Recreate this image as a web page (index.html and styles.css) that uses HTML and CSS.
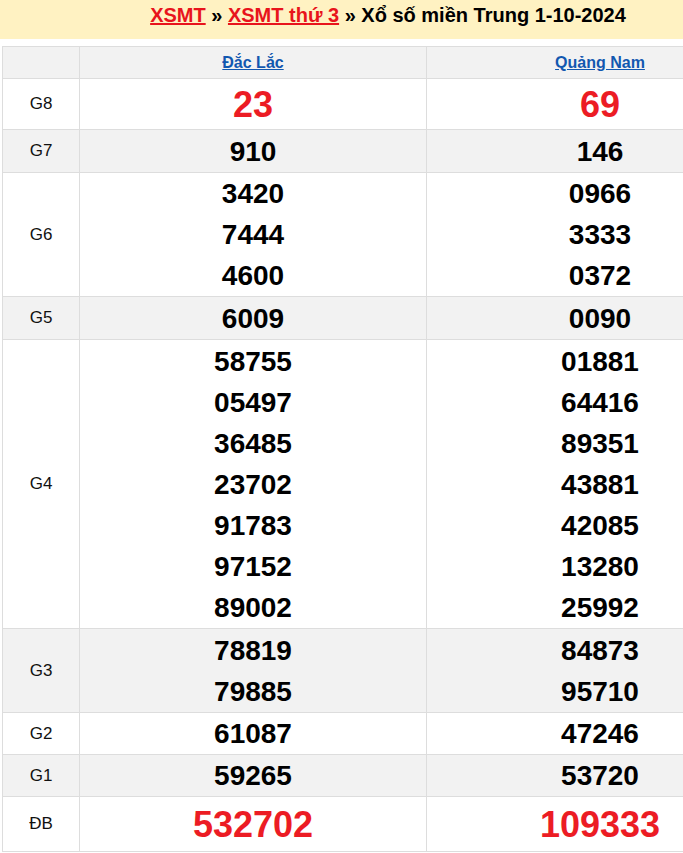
FILE: index.html
```html
<!DOCTYPE html>
<html lang="vi">
<head>
<meta charset="utf-8">
<title>XSMT thứ 3 - Xổ số miền Trung 1-10-2024</title>
<link rel="stylesheet" href="styles.css">
</head>
<body>
<div class="page">
  <h2 class="crumb"><a href="#">XSMT</a> » <a href="#">XSMT thứ 3</a> » Xổ số miền Trung 1-10-2024</h2>
  <table class="result">
    <colgroup><col class="c-lbl"><col class="c-prov"><col class="c-prov"></colgroup>
    <tr class="head alt">
      <th></th>
      <th><a href="#">Đắc Lắc</a></th>
      <th><a href="#">Quảng Nam</a></th>
    </tr>
    <tr class="g8">
      <td class="lbl">G8</td>
      <td class="num red big"><div>23</div></td>
      <td class="num red big"><div>69</div></td>
    </tr>
    <tr class="alt g7">
      <td class="lbl">G7</td>
      <td class="num"><div>910</div></td>
      <td class="num"><div>146</div></td>
    </tr>
    <tr class="g6">
      <td class="lbl">G6</td>
      <td class="num"><div>3420</div><div>7444</div><div>4600</div></td>
      <td class="num"><div>0966</div><div>3333</div><div>0372</div></td>
    </tr>
    <tr class="alt g5">
      <td class="lbl">G5</td>
      <td class="num"><div>6009</div></td>
      <td class="num"><div>0090</div></td>
    </tr>
    <tr class="g4">
      <td class="lbl">G4</td>
      <td class="num"><div>58755</div><div>05497</div><div>36485</div><div>23702</div><div>91783</div><div>97152</div><div>89002</div></td>
      <td class="num"><div>01881</div><div>64416</div><div>89351</div><div>43881</div><div>42085</div><div>13280</div><div>25992</div></td>
    </tr>
    <tr class="alt g3">
      <td class="lbl">G3</td>
      <td class="num"><div>78819</div><div>79885</div></td>
      <td class="num"><div>84873</div><div>95710</div></td>
    </tr>
    <tr class="g2">
      <td class="lbl">G2</td>
      <td class="num"><div>61087</div></td>
      <td class="num"><div>47246</div></td>
    </tr>
    <tr class="alt g1">
      <td class="lbl">G1</td>
      <td class="num"><div>59265</div></td>
      <td class="num"><div>53720</div></td>
    </tr>
    <tr class="db">
      <td class="lbl">ĐB</td>
      <td class="num red big"><div>532702</div></td>
      <td class="num red big"><div>109333</div></td>
    </tr>
  </table>
</div>
</body>
</html>
```
FILE: styles.css
```css
html, body {
  margin: 0;
  padding: 0;
  overflow: hidden;
  background: #fff;
}
body {
  font-family: "Liberation Sans", Arial, sans-serif;
  color: #000;
}
.page {
  width: 776px;
}
.crumb {
  margin: 0;
  height: 39px;
  line-height: 31px;
  background: #fff2c2;
  text-align: center;
  font-size: 20px;
  font-weight: bold;
}
.crumb a {
  color: #e8141c;
  text-decoration: underline;
}
.result {
  margin: 7px 2px 0;
  border-collapse: collapse;
  table-layout: fixed;
  width: 772px;
  border: 1px solid #dddddd;
}
.c-lbl { width: 77px; }
.c-prov { width: 347px; }
.result th,
.result td {
  border: 1px solid #dddddd;
  padding: 0;
  text-align: center;
  vertical-align: middle;
}
.result tr.alt { background: #f2f2f2; }
.result th {
  height: 31px;
  font-size: 16px;
  font-weight: bold;
}
.result th a {
  color: #1258b0;
  text-decoration: underline;
}
.lbl {
  font-size: 17px;
  color: #111;
}
.num {
  font-size: 28px;
  font-weight: bold;
}
.num div {
  line-height: 41px;
}
.num.red { color: #ec1c24; }
.num.big { font-size: 36px; }
.g8 td { height: 50px; }
.g7 td { height: 42px; }
.g6 td { height: 123px; }
.g5 td { height: 42px; }
.g4 td { height: 288px; }
.g3 td { height: 83px; }
.g2 td { height: 41px; }
.g1 td { height: 41px; }
.db td { height: 54px; }
```
